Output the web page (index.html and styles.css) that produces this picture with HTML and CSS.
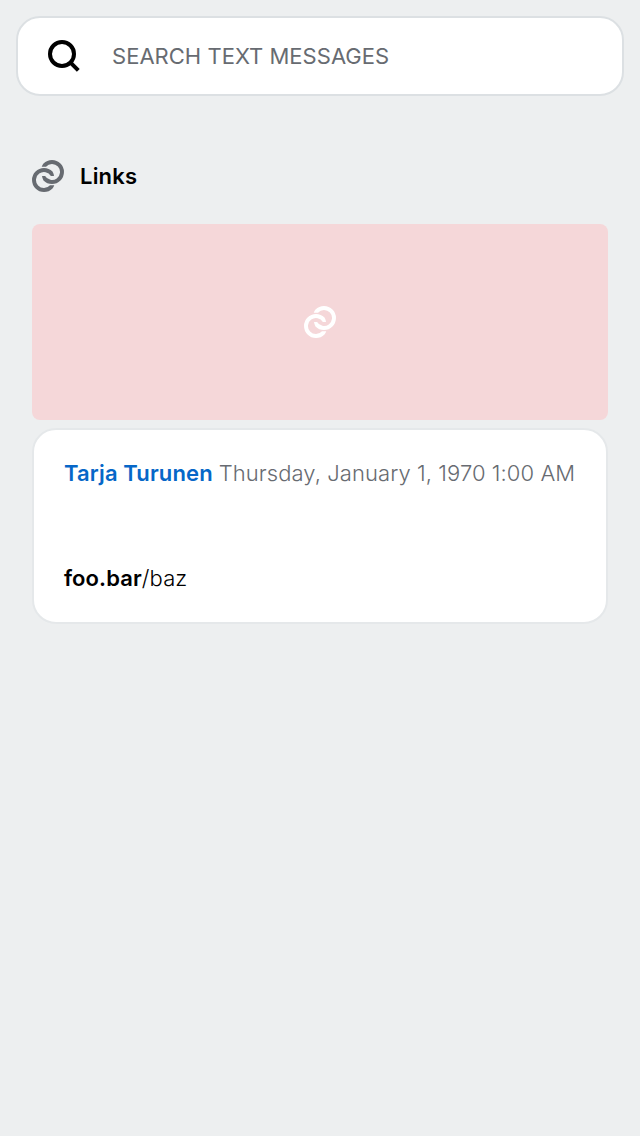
FILE: index.html
```html
<!DOCTYPE html>
<html lang="en">
<head>
<meta charset="utf-8">
<title>Collection</title>
<link rel="stylesheet" href="styles.css">
</head>
<body>
<svg class="defs" width="0" height="0" aria-hidden="true">
  <symbol id="link" viewBox="0 0 32 32">
    <path fill="currentColor" d="M20.5 28.5A12 12 0 1 1 20.5 11.5Q21.6 13.4 22 16H18.9A8 8 0 1 0 18 25.3H22.3Q21.6 27.2 20.5 28.5Z"/>
    <path fill="currentColor" d="M11.5 3.5A12 12 0 1 1 11.5 20.5Q10.4 18.6 10 16H13.1A8 8 0 1 0 14 6.7H9.7Q10.4 4.8 11.5 3.5Z"/>
  </symbol>
</svg>
<header class="search">
  <svg class="search-icon" viewBox="0 0 32 32"><circle cx="14" cy="14" r="12"/><path d="M22.3 22.3L30.3 30.3"/></svg>
  <span class="search-text">SEARCH TEXT MESSAGES</span>
</header>
<main class="content">
  <h1 class="section-title"><svg class="link-icon"><use href="#link"/></svg><span class="section-label">Links</span></h1>
  <div class="preview"><svg class="link-icon"><use href="#link"/></svg></div>
  <article class="card">
    <div class="meta"><span class="sender">Tarja Turunen</span><span class="date">Thursday, January 1, 1970 1:00 AM</span></div>
    <div class="url"><b class="host">foo.bar</b><span class="path">/baz</span></div>
  </article>
</main>
</body>
</html>
```
FILE: styles.css
```css
* { box-sizing: border-box; }
body {
  margin: 0;
  min-height: 1136px;
  padding: 16px;
  background: #edeff0;
  font: 400 22px/32px Inter, "Liberation Sans", sans-serif;
  color: #000;
}
.defs { display: block; }
.search {
  display: flex;
  align-items: center;
  height: 80px;
  padding: 0 30px;
  gap: 32px;
  border: 2px solid #dce0e3;
  border-radius: 24px;
  background: #fff;
}
.search-icon { width: 32px; height: 32px; fill: none; stroke: #000; stroke-width: 4; }
.search-text { color: #676b71; letter-spacing: 0.02px; white-space: nowrap; }
.content { padding: 64px 16px 0; }
.section-title {
  display: flex;
  align-items: center;
  gap: 16px;
  margin: 0 0 32px;
  font-size: 22px;
  font-weight: 600;
  color: #000;
}
.section-label { letter-spacing: 0.2px; }
.link-icon { display: block; width: 32px; height: 32px; color: #676b71; }
.preview {
  display: flex;
  align-items: center;
  justify-content: center;
  height: 196px;
  border-radius: 8px;
  background: #f5d7d9;
}
.preview .link-icon { color: #fff; }
.card {
  display: flex;
  flex-direction: column;
  justify-content: space-between;
  height: 196px;
  margin-top: 8px;
  padding: 27px 30px 28px;
  border: 2px solid #e5e8ea;
  border-radius: 24px;
  background: #fff;
}
.meta { display: flex; gap: 6px; white-space: nowrap; }
.sender { font-weight: 600; color: #0667c8; letter-spacing: 0.13px; }
.date { font-weight: 300; color: #676b71; letter-spacing: 0.07px; }
.host { font-weight: 600; letter-spacing: 0.1px; }
.path { font-weight: 300; letter-spacing: 0.1px; }
```
